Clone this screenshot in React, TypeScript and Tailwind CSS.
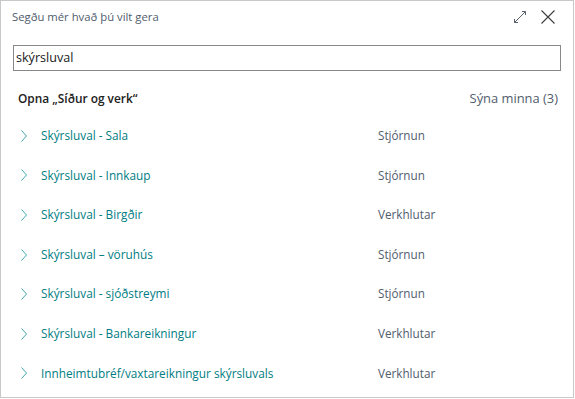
import React from "react";

const rows: [string, string][] = [
  ["Skýrsluval - Sala", "Stjórnun"],
  ["Skýrsluval - Innkaup", "Stjórnun"],
  ["Skýrsluval - Birgðir", "Verkhlutar"],
  ["Skýrsluval – vöruhús", "Stjórnun"],
  ["Skýrsluval - sjóðstreymi", "Stjórnun"],
  ["Skýrsluval - Bankareikningur", "Verkhlutar"],
  ["Innheimtubréf/vaxtareikningur skýrsluvals", "Verkhlutar"],
];

function Chevron() {
  return (
    <svg width="8" height="14" viewBox="0 0 8 14" className="shrink-0">
      <path d="M1.5 1.5 L6.5 7 L1.5 12.5" fill="none" stroke="#3fa9ae" strokeWidth="1" />
    </svg>
  );
}

export default function App() {
  return (
    <div
      className="w-[574px] h-[398px] border border-[#c8c8c8] bg-white flex flex-col"
      style={{ fontFamily: '"Segoe UI", "Open Sans", "Noto Sans", sans-serif' }}
    >
      <div className="h-[32px] flex items-center pl-[11px] pr-[17px] shrink-0">
        <span className="text-[11.3px] text-[#505c6d] flex-1">Segðu mér hvað þú vilt gera</span>
        <svg width="16" height="16" viewBox="0 0 16 16" className="mr-[12px]">
          <path d="M2.5 13.5 L13.5 2.5" stroke="#5a6270" strokeWidth="1" fill="none" />
          <path d="M2.5 10 L2.5 13.5 L6 13.5" stroke="#5a6270" strokeWidth="1" fill="none" />
          <path d="M10 2.5 L13.5 2.5 L13.5 6" stroke="#5a6270" strokeWidth="1" fill="none" />
        </svg>
        <svg width="16" height="16" viewBox="0 0 16 16">
          <path d="M1.5 1.5 L14.5 14.5 M14.5 1.5 L1.5 14.5" stroke="#3c3c3c" strokeWidth="1.1" fill="none" />
        </svg>
      </div>
      <div className="mx-[12px] mt-[12px] h-[26px] border border-[#8a8886] flex items-center px-[2px] shrink-0">
        <span className="text-[12.6px] text-[#212121]">skýrsluval</span>
      </div>
      <div className="mt-[16px] h-[24px] flex items-center justify-between pl-[17px] pr-[15px] shrink-0">
        <span className="text-[11.9px] font-semibold text-[#212121]">Opna „Síður og verk“</span>
        <span className="text-[12.9px] text-[#505c6d]">Sýna minna (3)</span>
      </div>
      <div className="mt-[5px] flex flex-col">
        {rows.map(([name, cat]) => (
          <div key={name} className="h-[39.6px] flex items-center pl-[19px]">
            <Chevron />
            <span className="ml-[13px] w-[337px] text-[11.8px] text-[#007d83]">{name}</span>
            <span className="text-[11.7px] text-[#505c6d]">{cat}</span>
          </div>
        ))}
      </div>
    </div>
  );
}
